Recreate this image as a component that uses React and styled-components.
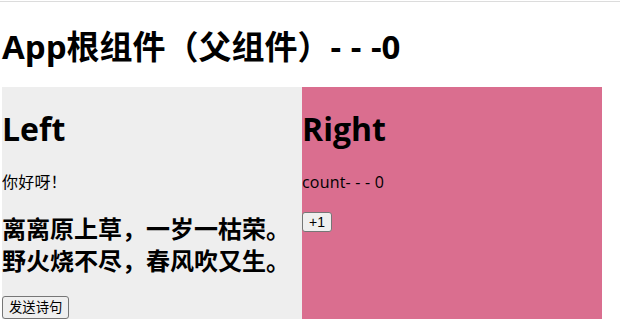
import React, { useState } from "react";
import styled, { createGlobalStyle } from "styled-components";

const GlobalStyle = createGlobalStyle`
  html, body {
    margin: 0;
    padding: 0;
    background: #ffffff;
  }
  body {
    font-family: "Open Sans", "Noto Sans CJK SC", sans-serif;
    font-size: 16px;
    color: #000000;
  }
`;

const Page = styled.div`
  margin-top: 1px;
  border-top: 1px solid #dcdcdc;
  padding: 0 2px;
`;

const Title = styled.h1`
  margin: 23px 0 19px;
  font-size: 33px;
  line-height: 43px;
  font-weight: 700;
  white-space: nowrap;
  word-spacing: 1px;
`;

const Board = styled.div`
  display: flex;
  width: 600px;
`;

const Panel = styled.div`
  flex: 0 0 300px;
  background: ${(p) => p.$bg};
  overflow: hidden;
`;

const PanelTitle = styled.h1`
  margin: 21px 0;
  font-size: 32px;
  line-height: 42px;
  font-weight: 700;
`;

const Text = styled.p`
  margin: 22px 0 16px;
  font-size: 16px;
  line-height: 21px;
  letter-spacing: 0.2px;
`;

const Poem = styled.h2`
  margin: 20px 0 19px;
  font-size: 24px;
  line-height: 32px;
  font-weight: 700;
`;

const Button = styled.button`
  display: block;
  margin: ${(p) => (p.$cjk ? "0" : "19px 0 0")};
  padding: 1px 6px;
  font-family: "Liberation Sans", "Noto Sans CJK SC", sans-serif;
  font-size: ${(p) => (p.$cjk ? "13.33px" : "14px")};
  line-height: ${(p) => (p.$cjk ? "19px" : "16px")};
  color: #000000;
  background: #efefef;
  border: 1px solid #767676;
  border-radius: 3px;
`;

export default function App() {
  const [count, setCount] = useState(0);
  const [poem, setPoem] = useState(false);
  return (
    <>
      <GlobalStyle />
      <Page>
        <Title>App根组件（父组件）- - -{count}</Title>
        <Board>
          <Panel $bg="#eeeeee">
            <PanelTitle>Left</PanelTitle>
            <Text>你好呀！</Text>
            <Poem>
              离离原上草，一岁一枯荣。
              <br />
              野火烧不尽，春风吹又生。
            </Poem>
            <Button $cjk onClick={() => setPoem(!poem)}>发送诗句</Button>
          </Panel>
          <Panel $bg="#da6e8f">
            <PanelTitle>Right</PanelTitle>
            <Text>count- - - {count}</Text>
            <Button onClick={() => setCount(count + 1)}>+1</Button>
          </Panel>
        </Board>
      </Page>
    </>
  );
}
